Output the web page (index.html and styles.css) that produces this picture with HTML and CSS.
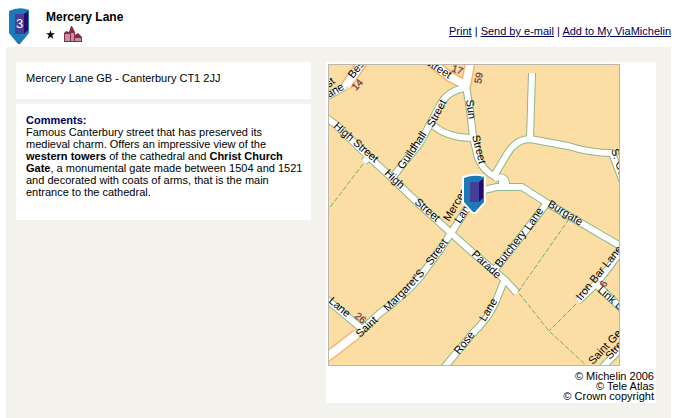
FILE: index.html
```
<!DOCTYPE html>
<html lang="en">
<head>
    <meta charset="UTF-8">
    <meta name="viewport" content="width=device-width, initial-scale=1.0">
    <link rel="stylesheet" href="styles.css">
    <title>Mercery Lane</title>
</head>
<body>
    <header class="top">
        <svg class="marker" viewBox="0 0 20 36" role="img" aria-label="3">
            <path d="M0 3Q10-2 20 2V25L11 36H9L0 25Z" fill="#1d7ab8"/>
            <path d="M6 6H15V26H6Z" fill="#44409a"/>
            <path d="M15 6L19 3V22L15 26Z" fill="#280a6b"/>
            <text x="7" y="20" class="number">3</text>
        </svg>
        <div class="place">
            <h1>Mercery Lane</h1>
            <div class="symbols">
                <svg class="star" viewBox="0 0 9 9">
                    <path d="M4.500 0L5.500 3.200H9L6.200 5.300L7.300 9L4.500 6.800L1.700 9L2.800 5.300L0 3.200H3.500Z"/>
                </svg>
                <svg class="castle" viewBox="0 0 18 16">
                    <path d="M0 16V7L2 5L5 6L7 0H8L11 6V9L14 7L18 11V16Z" fill="#8b2749"/>
                    <path d="M1 8H6V15H1ZM7 7H10V15H7ZM11 12H17V15H11Z" fill="#b995a5"/>
                </svg>
            </div>
        </div>
        <nav class="tools">
            <a href="#">Print</a> | <a href="#">Send by e-mail</a> | <a href="#">Add to My ViaMichelin</a>
        </nav>
    </header>

    <main>
        <div class="info">
            <p class="card address">Mercery Lane GB - Canterbury CT1 2JJ</p>
            <section class="card comments">
                <h2>Comments:</h2>
                <p>Famous Canterbury street that has preserved its medieval charm. Offers an impressive view of the <b>western towers</b> of the cathedral and <b>Christ Church Gate</b>, a monumental gate made between 1504 and 1521 and decorated with coats of arms, that is the main entrance to the cathedral.</p>
            </section>
        </div>

        <figure>
            <svg class="map" viewBox="328 64 292 302">
                <defs>
                    <g id="streets">
                        <path d="M324 116L335 124L369 157L393 179L420 205L451 233L472 252L505 280L517 293"/>
                        <path d="M369 157L364 162"/>
                        <path d="M393 177L402 165L420 143L430 124L439 107Q447 90 466 88"/>
                        <path d="M434 126Q448 138 474 138"/>
                        <path d="M466 86L470 110L473 137L478 158Q483 171 497 178"/>
                        <path d="M532 73L530 139"/>
                        <path d="M494 176L507 154Q516 139 530 139L568 146Q590 153 612 153L623 182"/>
                        <path d="M494 179C502 175 507 178 506 187"/>
                        <path d="M497 187H522L547 203L622 247"/>
                        <path d="M502 180V187H497L484 190L466 210L451 233L440 250L420 277Q405 295 380 313L358 333"/>
                        <path d="M547 203L530 225L494 271"/>
                        <path d="M325 298L361 328"/>
                        <path d="M504 281L496 301Q489 318 472 334L443 369"/>
                        <path d="M622 249L610 266L596 284L578 301"/>
                        <path d="M596 284L623 310"/>
                        <path d="M346 86L324 98"/>
                        <path d="M600 370L623 346"/>
                    </g>
                    <g id="mainroads">
                        <path d="M425 57L450 77L466 85L471 58"/>
                        <path d="M364 60L346 86"/>
                        <path d="M357 334L323 360"/>
                    </g>
                </defs>
                <rect x="328" y="64" width="292" height="302" fill="#fcdda3"/>
                <use href="#mainroads" class="road main-edge"/>
                <use href="#streets" class="road street-edge"/>
                <use href="#streets" class="road street"/>
                <use href="#mainroads" class="road main-fill"/>
                <path class="footpath" d="M363 164L328 210M569 219L518 292L549 331L588 367M576 304L549 331"/>

                <g class="numbers">
                    <text transform="translate(356 91) rotate(-47)">14</text>
                    <text transform="translate(451 71) rotate(20)">17</text>
                    <text transform="translate(481 84) rotate(-80)">59</text>
                    <text transform="translate(354 317) rotate(40)">26</text>
                    <text transform="translate(605 288) rotate(-60)">6</text>
                </g>
                <g class="names">
                    <text transform="translate(353 79) rotate(-52)">Bes</text>
                    <text transform="translate(329 88) rotate(-38)">st</text>
                    <text transform="translate(329 98) rotate(-30)">ane</text>
                    <text transform="translate(424 63) rotate(33)">Street</text>
                    <text transform="translate(333 127) rotate(41)">High Street</text>
                    <text transform="translate(403 170) rotate(-56)">Guildhall</text>
                    <text transform="translate(433 128) rotate(-62)">Street</text>
                    <text transform="translate(466 100) rotate(83)">Sun</text>
                    <text transform="translate(472 136) rotate(76)">Street</text>
                    <text transform="translate(384 174) rotate(43)">High</text>
                    <text transform="translate(414 203) rotate(41)">Street</text>
                    <text transform="translate(449 222) rotate(-59)">Mercery</text>
                    <text transform="translate(460 224) rotate(-56)">Lane</text>
                    <text transform="translate(471 255) rotate(43)">Parade</text>
                    <text transform="translate(500 268) rotate(-52)">Butchery</text>
                    <text transform="translate(530 231) rotate(-56)">Lane</text>
                    <text transform="translate(547 206) rotate(31)">Burgate</text>
                    <text transform="translate(611 150) rotate(72)">S. Ge</text>
                    <text transform="translate(431 266) rotate(-54)">Street</text>
                    <text transform="translate(388 312) rotate(-46)">Margaret'S</text>
                    <text transform="translate(360 338) rotate(-43)">Saint</text>
                    <text transform="translate(328 302) rotate(40)">Lane</text>
                    <text transform="translate(459 355) rotate(-51)">Rose</text>
                    <text transform="translate(485 322) rotate(-59)">Lane</text>
                    <text transform="translate(581 301) rotate(-51)">Iron Bar Lane</text>
                    <text transform="translate(597 291) rotate(41)">Link L</text>
                    <text transform="translate(593 365) rotate(-47)">Saint Geor</text>
                    <text transform="translate(610 360) rotate(-47)">Stre</text>
                </g>
                <g class="pin">
                    <path d="M464 178Q474 174 484 177V202L475 212H473L464 202Z" fill="#1d7ab8" stroke="#fff" stroke-width="4" paint-order="stroke" stroke-linejoin="round"/>
                    <path d="M470 182H479V202H470Z" fill="#44409a"/>
                    <path d="M479 182L483 179V198L479 202Z" fill="#280a6b"/>
                </g>
                <rect x="328.500" y="64.500" width="291" height="301" fill="none" stroke="#bab7b0"/>
            </svg>
            <figcaption>
                <span>© Michelin 2006</span>
                <span>© Tele Atlas</span>
                <span>© Crown copyright</span>
            </figcaption>
        </figure>
    </main>
</body>
</html>
```

FILE: styles.css
```
* {
 margin: 0;
 padding: 0;
 box-sizing: border-box;
}

body {
 min-height: 100vh;
 display: flex;
 flex-direction: column;
 background-color: white;
 padding: 0 4px 0 6px;
 font-family: "Liberation Sans", Arial, Helvetica, sans-serif;
 font-size: 11px;
 line-height: 12px;
 color: black;
}

.top {
 display: flex;
 height: 47px;
 padding: 8px 0 0 3px;
}

.marker {
 width: 20px;
 height: 36px;
}

.number {
 font-size: 13px;
 fill: white;
}

.place {
 margin-left: 17px;
}

h1 {
 font-size: 12px;
 line-height: 18px;
}

.symbols {
 display: flex;
 align-items: center;
 gap: 9px;
}

.star {
 width: 9px;
 height: 9px;
}

.castle {
 width: 18px;
 height: 16px;
}

.tools {
 margin-left: auto;
 padding-top: 17px;
 color: #000040;
}

.tools a {
 color: #000050;
}

main {
 flex: 1;
 display: flex;
 align-items: flex-start;
 gap: 15px;
 padding: 15px 15px 15px 10px;
 background-color: #f3f2ed;
}

.info {
 flex: 1;
 display: flex;
 flex-direction: column;
 gap: 5px;
}

.card {
 background-color: white;
 padding: 10px;
}

.address {
 padding: 10px 10px 15px;
}

.comments {
 padding: 10px 4px 22px 10px;
}

h2 {
 font-size: 11px;
 color: #000060;
}

figure {
 width: 330px;
 padding: 2px;
 background-color: white;
}

.map {
 display: block;
 width: 292px;
 height: 302px;
}

figcaption {
 display: flex;
 flex-direction: column;
 align-items: flex-end;
 padding-top: 5px;
 line-height: 10px;
}

.road {
 fill: none;
 stroke-linejoin: round;
}

.street-edge {
 stroke: #8db88a;
 stroke-width: 8px;
}

.street {
 stroke: white;
 stroke-width: 6px;
}

.main-edge {
 stroke: #f5b56c;
 stroke-width: 11px;
}

.main-fill {
 stroke: white;
 stroke-width: 8px;
}

.footpath {
 fill: none;
 stroke: #6fac70;
 stroke-dasharray: 5 2;
}

.names {
 font-family: "Liberation Sans Narrow", "Liberation Sans", Arial, sans-serif;
 font-size: 11px;
}

.numbers {
 font-size: 10px;
 fill: #70404a;
 stroke: #70404a;
 stroke-width: 0.3px;
}
```
